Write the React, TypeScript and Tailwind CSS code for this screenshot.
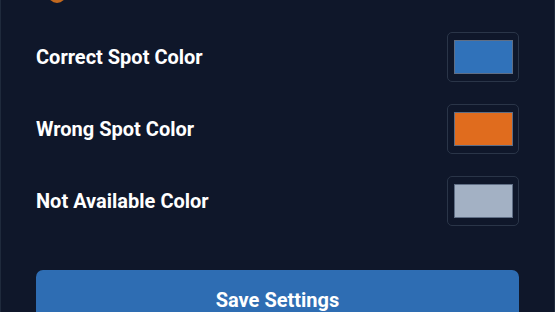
import React from "react";

const rows = [
  { label: "Correct Spot Color", color: "#3072ba" },
  { label: "Wrong Spot Color", color: "#e06c1e" },
  { label: "Not Available Color", color: "#a3b1c4" },
];

export default function App() {
  return (
    <div
      className="relative w-[555px] h-[312px] overflow-hidden bg-[#0f172a] border-x border-[#1f2a3c]"
      style={{ fontFamily: "Roboto, 'Liberation Sans', sans-serif" }}
    >
      <div className="absolute left-[47px] top-[-15px] w-[18px] h-[18px] rounded-full bg-[#c2691f]" />
      <div className="flex flex-col pl-[35px] pr-[35px] pt-[32px]">
        <div className="flex flex-col gap-[22px]">
          {rows.map((r) => (
            <div key={r.label} className="flex items-center justify-between h-[50px]">
              <span className="text-white font-bold text-[20px]">{r.label}</span>
              <div className="w-[72px] h-[50px] rounded-[5px] border border-[#2a3548] flex items-center justify-center">
                <div
                  className="w-[59px] h-[34px] border border-[#5f6e85]"
                  style={{ backgroundColor: r.color }}
                />
              </div>
            </div>
          ))}
        </div>
        <button className="mt-[44px] h-[60px] w-full rounded-[7px] bg-[#2e6db3] text-white font-bold text-[20px] flex items-center justify-center">
          Save Settings
        </button>
      </div>
    </div>
  );
}
